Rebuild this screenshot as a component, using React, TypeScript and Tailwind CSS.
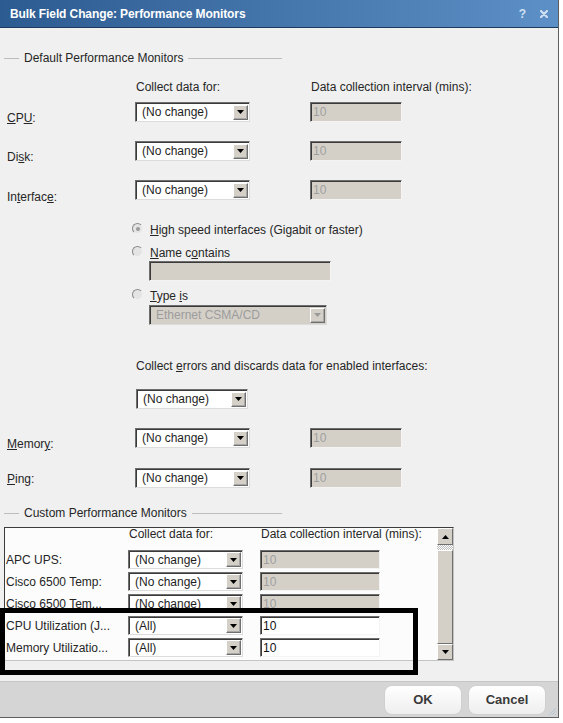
import React from "react";

const F = "font-['Liberation_Sans',Arial,Helvetica,sans-serif]";

function Arrow({ disabled, up }: { disabled?: boolean; up?: boolean }) {
  return (
    <div className="w-[15px] h-[15px] flex items-center justify-center bg-[#d4d0c8] border border-t-[#ffffff] border-l-[#ffffff] border-b-[#6f6f6f] border-r-[#6f6f6f] shadow-[inset_-1px_-1px_0_#a8a8a8]">
      <svg width="7" height="4" viewBox="0 0 7 4">
        <path d={up ? "M0 4H7L3.5 0Z" : "M0 0H7L3.5 4Z"} fill={disabled ? "#9a9a9a" : "#000"} />
      </svg>
    </div>
  );
}

function Select({ cls, value, disabled }: { cls: string; value: string; disabled?: boolean }) {
  return (
    <div
      className={`${cls} flex items-center justify-between pl-[6px] pr-[1px] border border-t-[#6e6e6e] border-l-[#6e6e6e] border-b-[#dcdcdc] border-r-[#dcdcdc] shadow-[inset_1px_1px_0_#3a3a3a] ${
        disabled ? "bg-[#d4d0c8] text-[#9c9c9c]" : "bg-white text-[#1e1e1e]"
      }`}
    >
      <span className="text-[12px] leading-none whitespace-nowrap">{value}</span>
      <Arrow disabled={disabled} />
    </div>
  );
}

function Field({ cls, value, disabled }: { cls: string; value: string; disabled?: boolean }) {
  return (
    <div
      className={`${cls} flex items-center pl-[2px] border border-t-[#6e6e6e] border-l-[#6e6e6e] border-b-[#f4f4f4] border-r-[#f4f4f4] shadow-[inset_1px_1px_0_#3a3a3a] text-[12px] leading-none ${
        disabled ? "bg-[#d4d0c8] text-[#a0a0a0]" : "bg-white text-[#111]"
      }`}
    >
      {value}
    </div>
  );
}

function Radio({ checked }: { checked?: boolean }) {
  return (
    <div className="w-[11px] h-[11px] shrink-0 rounded-full border border-t-[#8a8a8a] border-l-[#8a8a8a] border-b-[#f0f0f0] border-r-[#f0f0f0] bg-[#e4e4e4] flex items-center justify-center">
      {checked && <div className="w-[4px] h-[4px] rounded-full bg-[#9a9a9a]" />}
    </div>
  );
}

function Legend({ text }: { text: string }) {
  return (
    <div className="flex items-center h-[14px] w-[282px]">
      <div className="ml-[4px] w-[15px] h-px bg-[#bdbdbd]" />
      <span className="px-[5px] text-[12px] leading-[14px] text-[#262626] whitespace-nowrap">{text}</span>
      <div className="flex-1 h-px bg-[#bdbdbd]" />
    </div>
  );
}

function DefRow({ label, top, labelPt }: { label: React.ReactNode; top: string; labelPt: string }) {
  return (
    <div className={`${top} flex h-[20px]`}>
      <div className={`w-[135px] pl-[7px] ${labelPt} text-[12px] leading-[14px] text-[#262626]`}>{label}</div>
      <Select cls="w-[115px] h-[20px]" value="(No change)" />
      <div className="w-[60px]" />
      <Field cls="w-[92px] h-[20px]" value="10" disabled />
    </div>
  );
}

function CustRow({ label, sel, val, disabled, top }: { label: string; sel: string; val: string; disabled?: boolean; top: string }) {
  return (
    <div className={`${top} flex items-center h-[19px]`}>
      <div className="w-[123px] pl-[1px] text-[12px] leading-[14px] text-[#262626] whitespace-nowrap overflow-hidden">{label}</div>
      <Select cls="w-[115px] h-[19px]" value={sel} />
      <div className="w-[17px]" />
      <Field cls="w-[120px] h-[19px]" value={val} disabled={disabled} />
    </div>
  );
}

export default function App() {
  return (
    <div className={`${F} relative w-[563px] h-[723px] bg-white overflow-hidden`}>
      <div className="w-[559px] bg-[#f0f0f0] border-r border-b border-[#5e5e5e] flex flex-col">
        {/* Title bar */}
        <div className="h-[28px] flex items-center bg-gradient-to-r from-[#2c5b91] to-[#5d90c6] border-b border-[#1d3a5c]">
          <span className="pl-[10px] text-[12px] font-bold text-white tracking-[-0.1px]">
            Bulk Field Change: Performance Monitors
          </span>
          <div className="flex-1" />
          <span className="text-[12px] font-bold text-[#cfe0f3] mr-[14px]">?</span>
          <svg width="8" height="8" viewBox="0 0 8 8" className="mr-[10px]">
            <path d="M1 1L7 7M7 1L1 7" stroke="#cfe0f3" strokeWidth="2.2" strokeLinecap="round" />
          </svg>
        </div>

        {/* Body */}
        <div className="flex flex-col">
          <div className="mt-[23px]">
            <Legend text="Default Performance Monitors" />
          </div>
          <div className="mt-[15px] flex h-[14px] text-[12px] leading-[14px] text-[#262626]">
            <span className="ml-[136px] w-[174px]">Collect data for:</span>
            <span className="ml-[1px]">Data collection interval (mins):</span>
          </div>
          <DefRow
            top="mt-[8px]"
            labelPt="pt-[9px]"
            label={
              <span>
                <u>C</u>P<u>U</u>:
              </span>
            }
          />
          <DefRow
            top="mt-[19px]"
            labelPt="pt-[9px]"
            label={
              <span>
                Di<u>s</u>k:
              </span>
            }
          />
          <DefRow
            top="mt-[19px]"
            labelPt="pt-[10px]"
            label={
              <span>
                In<u>t</u>erfac<u>e</u>:
              </span>
            }
          />

          {/* Radios */}
          <div className="mt-[23px] flex items-start pl-[132px] h-[14px]">
            <Radio checked />
            <span className="ml-[7px] text-[12px] leading-[14px] text-[#262626]">
              <u>H</u>igh speed interfaces (Gigabit or faster)
            </span>
          </div>
          <div className="mt-[9px] flex items-start pl-[132px] h-[14px]">
            <Radio />
            <span className="ml-[7px] text-[12px] leading-[14px] text-[#262626]">
              <u>N</u>ame c<u>o</u>ntains
            </span>
          </div>
          <div className="mt-[1px] pl-[149px]">
            <Field cls="w-[182px] h-[20px]" value="" disabled />
          </div>
          <div className="mt-[8px] flex items-start pl-[132px] h-[14px]">
            <Radio />
            <span className="ml-[7px] text-[12px] leading-[14px] text-[#262626]">
              <u>T</u>ype <u>i</u>s
            </span>
          </div>
          <div className="mt-[2px] pl-[149px]">
            <Select cls="w-[178px] h-[20px]" value="Ethernet CSMA/CD" disabled />
          </div>

          <div className="mt-[34px] pl-[136px] h-[14px] text-[12px] leading-[14px] text-[#262626]">
            Collect <u>e</u>rrors and discards data for enabled interfaces:
          </div>
          <div className="mt-[16px] pl-[136px]">
            <Select cls="w-[112px] h-[20px]" value="(No change)" />
          </div>
          <DefRow
            top="mt-[19px]"
            labelPt="pt-[9px]"
            label={
              <span>
                <u>M</u>emor<u>y</u>:
              </span>
            }
          />
          <DefRow
            top="mt-[20px]"
            labelPt="pt-[4px]"
            label={
              <span>
                <u>P</u>ing:
              </span>
            }
          />

          <div className="mt-[18px]">
            <Legend text="Custom Performance Monitors" />
          </div>

          {/* Custom panel */}
          <div className="mt-[7px] ml-[4px] w-[450px] h-[134px] flex border border-t-[#3c3c3c] border-l-[#3c3c3c] border-b-[#c4c4c4] border-r-[#c4c4c4] bg-[#fcfcfc]">
            <div className="flex-1 flex flex-col overflow-hidden">
              <div className="flex h-[13px] text-[12px] leading-[13px] text-[#262626]">
                <span className="ml-[124px] w-[132px]">Collect data for:</span>
                <span>Data collection interval (mins):</span>
              </div>
              <CustRow top="mt-[9px]" label="APC UPS:" sel="(No change)" val="10" disabled />
              <CustRow top="mt-[3px]" label="Cisco 6500 Temp:" sel="(No change)" val="10" disabled />
              <CustRow top="mt-[3px]" label="Cisco 6500 Tem..." sel="(No change)" val="10" disabled />
              <CustRow top="mt-[3px]" label="CPU Utilization (J..." sel="(All)" val="10" />
              <CustRow top="mt-[3px]" label="Memory Utilizatio..." sel="(All)" val="10" />
            </div>
            {/* Scrollbar */}
            <div className="w-[16px] flex flex-col">
              <div className="h-[17px] flex items-center justify-center bg-[#d4d0c8] border border-t-white border-l-white border-b-[#6f6f6f] border-r-[#6f6f6f]">
                <svg width="7" height="4" viewBox="0 0 7 4">
                  <path d="M0 4H7L3.5 0Z" fill="#000" />
                </svg>
              </div>
              <div className="h-[5px] bg-[repeating-conic-gradient(#bdbdbd_0_25%,#ffffff_0_50%)] bg-[length:2px_2px]" />
              <div className="flex-1 bg-[#d4d0c8] border border-t-white border-l-white border-b-[#6f6f6f] border-r-[#6f6f6f]" />
              <div className="h-[16px] flex items-center justify-center bg-[#d4d0c8] border border-t-white border-l-white border-b-[#6f6f6f] border-r-[#6f6f6f]">
                <svg width="7" height="4" viewBox="0 0 7 4">
                  <path d="M0 0H7L3.5 4Z" fill="#000" />
                </svg>
              </div>
            </div>
          </div>
        </div>

        {/* Footer */}
        <div className="mt-[20px] h-[36px] bg-[#d5d5d5] border-t border-[#c6c6c6] flex items-center justify-end pr-[12px] gap-[6px] relative">
          <button className="w-[78px] h-[30px] rounded-[8px] border border-[#d0d0d0] bg-gradient-to-b from-[#ffffff] to-[#eeeeee] text-[13px] font-bold text-[#3a3a3a]">
            OK
          </button>
          <button className="w-[78px] h-[30px] rounded-[8px] border border-[#d0d0d0] bg-gradient-to-b from-[#ffffff] to-[#eeeeee] text-[13px] font-bold text-[#3a3a3a]">
            Cancel
          </button>
          <svg width="9" height="9" viewBox="0 0 9 9" className="absolute right-[1px] bottom-[1px]">
            <path d="M8 1L1 8M8 4L4 8M8 7L7 8" stroke="#b8c4d0" strokeWidth="1" />
          </svg>
        </div>
      </div>

      {/* Annotation box */}
      <div className="absolute left-0 top-[608px] w-[418px] h-[67px] border-[5px] border-black" />
    </div>
  );
}
